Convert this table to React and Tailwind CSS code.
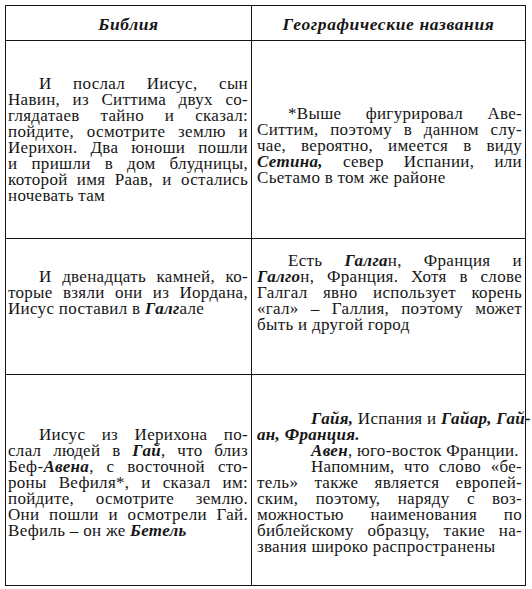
import React from "react";

const B = ({ children }) => <b className="font-bold italic">{children}</b>;

function Line({ children, last = false, indent = false, ind = "pl-[31px]" }) {
  return (
    <div
      className={
        (last ? "text-left" : "text-justify [text-align-last:justify]") +
        " whitespace-nowrap h-[16px] " +
        (indent ? ind : "")
      }
    >
      {children}
    </div>
  );
}

function Cell({ children, right = false, h, pad = "" }) {
  return (
    <div
      className={
        "flex flex-col justify-center border-r border-b border-[#151515] " +
        (right ? "pl-[5px] pr-[3px] " : "pl-[2px] pr-[3px] ") +
        pad
      }
      style={{ height: h }}
    >
      {children}
    </div>
  );
}

export default function App() {
  return (
    <div className="bg-white w-[532px] h-[589px] pt-[5px] pl-[5px] text-[#161616] [font-family:'Liberation_Serif','Times_New_Roman',serif] text-[17px] leading-[16px] tracking-[0.3px]">
      <div className="grid grid-cols-[246px_274px] w-[521px] border-l border-t border-[#151515]">
        <div className="h-[35px] flex items-center justify-center border-r border-b border-[#151515] font-bold italic text-[17.5px] tracking-[0.6px] pt-[2px]">
          Библия
        </div>
        <div className="h-[35px] flex items-center justify-center border-r border-b border-[#151515] font-bold italic text-[17.5px] tracking-[0.6px] pt-[2px]">
          Географические названия
        </div>

        <Cell h={198}>
          <Line indent>И послал Иисус, сын</Line>
          <Line>Навин, из Ситтима двух со-</Line>
          <Line>глядатаев тайно и сказал:</Line>
          <Line>пойдите, осмотрите землю и</Line>
          <Line>Иерихон. Два юноши пошли</Line>
          <Line>и пришли в дом блудницы,</Line>
          <Line>которой имя Раав, и остались</Line>
          <Line last>ночевать там</Line>
        </Cell>
        <Cell right h={198} pad="pt-[13px]">
          <Line indent>*Выше фигурировал Аве-</Line>
          <Line>Ситтим, поэтому в данном слу-</Line>
          <Line>чае, вероятно, имеется в виду</Line>
          <Line>
            <B>Сетина,</B> север Испании, или
          </Line>
          <Line last>Сьетамо в том же районе</Line>
        </Cell>

        <Cell h={136} pad="pb-[28px]">
          <Line indent>И двенадцать камней, ко-</Line>
          <Line>торые взяли они из Иордана,</Line>
          <Line last>
            Иисус поставил в <B>Галг</B>але
          </Line>
        </Cell>
        <Cell right h={136} pad="pb-[28px]">
          <Line indent>
            Есть <B>Галга</B>н, Франция и
          </Line>
          <Line>
            <B>Галго</B>н, Франция. Хотя в слове
          </Line>
          <Line>Галгал явно использует корень</Line>
          <Line>«гал» – Галлия, поэтому может</Line>
          <Line last>быть и другой город</Line>
        </Cell>

        <Cell h={211} pad="pt-[6px]">
          <Line indent>Иисус из Иерихона по-</Line>
          <Line>
            слал людей в <B>Гай</B>, что близ
          </Line>
          <Line>
            Беф-<B>Авена</B>, с восточной сто-
          </Line>
          <Line>роны Вефиля*, и сказал им:</Line>
          <Line>пойдите, осмотрите землю.</Line>
          <Line>Они пошли и осмотрели Гай.</Line>
          <Line last>
            Вефиль – он же <B>Бетель</B>
          </Line>
        </Cell>
        <Cell right h={211} pad="pt-[6px]">
          <Line indent ind="pl-[54px]">
            <B>Гайя,</B> Испания и <B>Гайар, Гай-</B>
          </Line>
          <Line last>
            <B>ан, Франция.</B>
          </Line>
          <Line indent last ind="pl-[54px]">
            <B>Авен</B>, юго-восток Франции.
          </Line>
          <Line indent ind="pl-[54px]">Напомним, что слово «бе-</Line>
          <Line>тель» также является европей-</Line>
          <Line>ским, поэтому, наряду с воз-</Line>
          <Line>можностью наименования по</Line>
          <Line>библейскому образцу, такие на-</Line>
          <Line last>звания широко распространены</Line>
        </Cell>
      </div>
    </div>
  );
}
